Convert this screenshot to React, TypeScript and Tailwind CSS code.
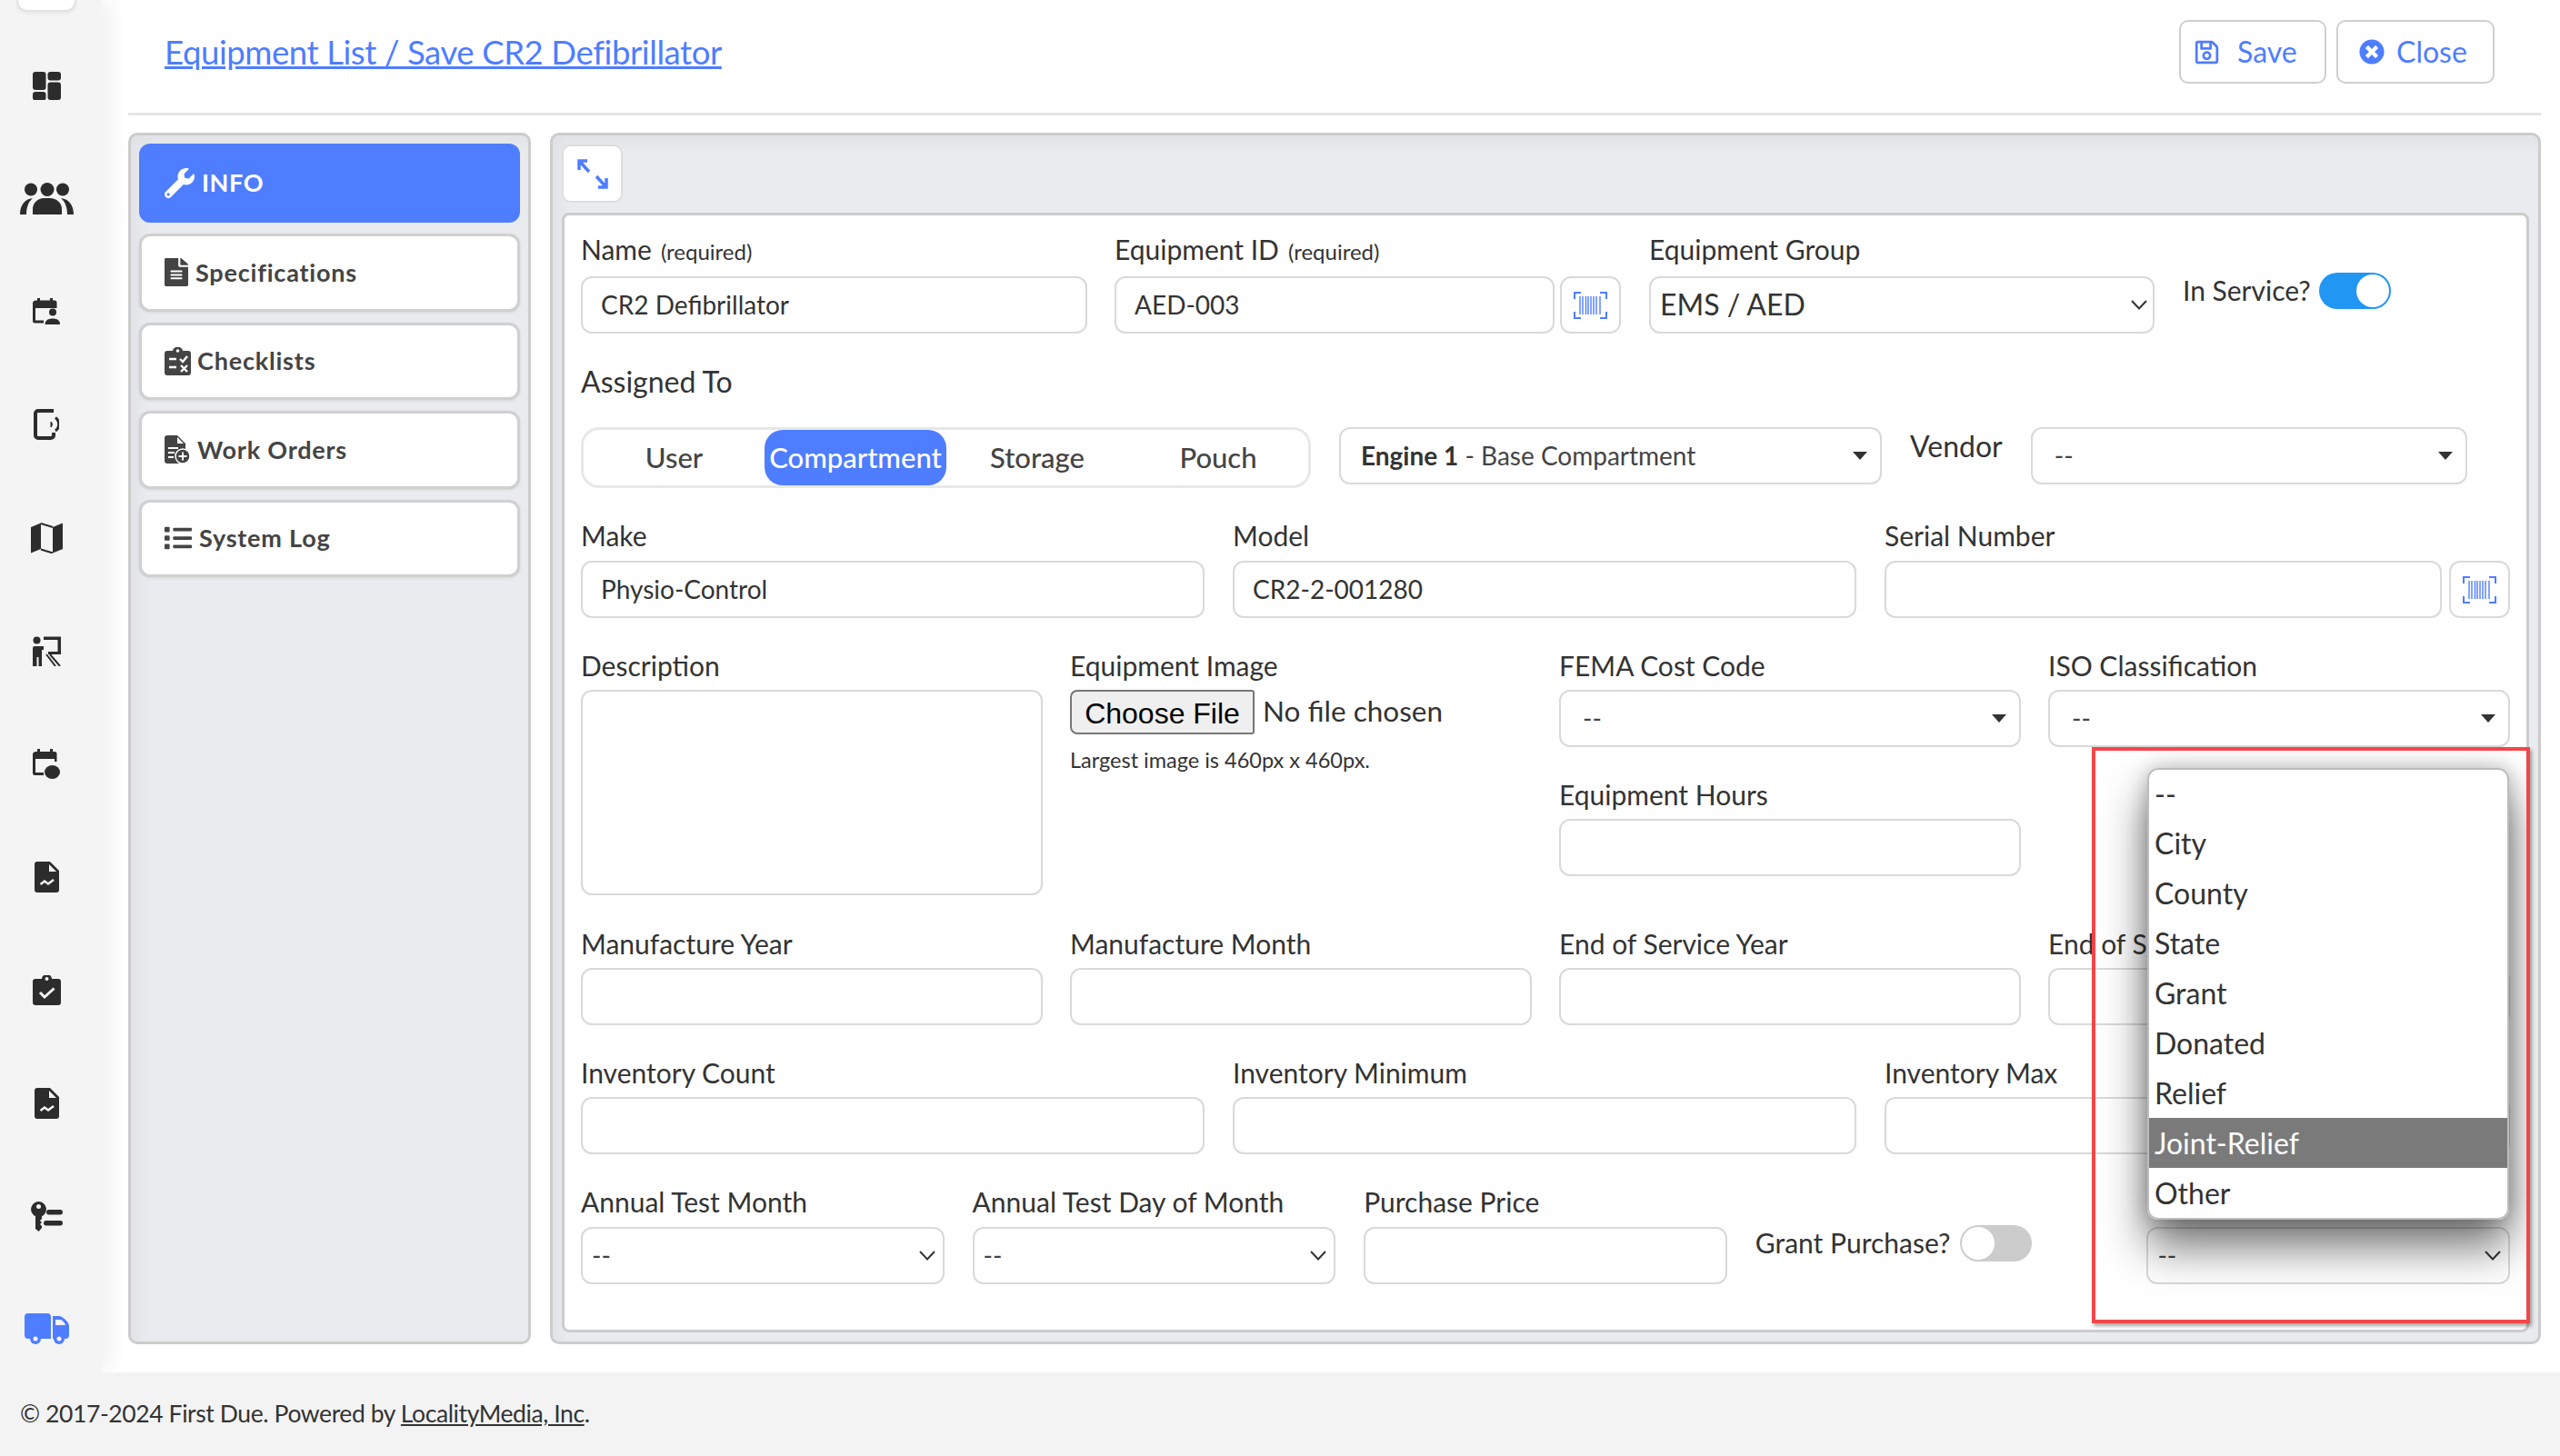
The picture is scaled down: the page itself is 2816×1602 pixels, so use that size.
import React from "react";
import { FaWrench, FaFileAlt, FaList, FaRegSave, FaTimesCircle } from "react-icons/fa";

const BLUE = "#4e7dff";

function DashIcon() {
  return (
    <svg width="31" height="31" viewBox="0 0 31 31" fill="#2c2c2c">
      <rect x="0" y="0" width="14.5" height="20" rx="3" />
      <rect x="0" y="22" width="14.5" height="9.5" rx="3" />
      <rect x="16.5" y="0" width="14.5" height="9.5" rx="3" />
      <rect x="16.5" y="11.5" width="14.5" height="19.5" rx="3" />
    </svg>
  );
}
function UsersIcon() {
  return (
    <svg width="59" height="35" viewBox="0 0 59 35" fill="#2c2c2c">
      <circle cx="12" cy="7.5" r="7" />
      <circle cx="30" cy="7.5" r="7.5" />
      <circle cx="47" cy="7.5" r="7" />
      <path d="M14 35 V29 C14 22 20 17 26 17 H33 C40 17 46 22 46 29 V35 Z" />
      <path d="M0 35 C0 25 5 18 14 17 C9 21 7 28 7 35 Z" />
      <path d="M59 35 C59 25 54 18 45 17 C50 21 52 28 52 35 Z" />
    </svg>
  );
}
function CalUserIcon() {
  return (
    <svg width="30" height="29" viewBox="0 0 30 29" fill="#2c2c2c">
      <rect x="5" y="0" width="3" height="4" />
      <rect x="19" y="0" width="3" height="4" />
      <path d="M3 2.5 H24 A2.5 2.5 0 0 1 26.5 5 V11 H0 V5 A3 3 0 0 1 3 2.5 Z" />
      <path d="M0 9 H3 V24.5 H12 V27.5 H2.5 A2.5 2.5 0 0 1 0 25 Z" />
      <circle cx="22" cy="15.5" r="4" />
      <path d="M13.5 29 C13.5 24.5 17 22.5 22 22.5 C27 22.5 30 24.5 30 29 Z" />
    </svg>
  );
}
function TabletIcon() {
  return (
    <svg width="28" height="34" viewBox="0 0 28 34" fill="none" stroke="#2c2c2c">
      <path d="M22 2 H5 A3 3 0 0 0 2 5 V29 A3 3 0 0 0 5 32 H19 A3 3 0 0 0 22 29 V26" strokeWidth="4" />
      <path d="M24 9.5 A9 9 0 0 1 24 24" strokeWidth="3" />
      <path d="M19 14 A4 4 0 0 1 19 20 Z" fill="#2c2c2c" strokeWidth="1" />
    </svg>
  );
}
function MapIcon() {
  return (
    <svg width="35" height="34" viewBox="0 0 35 34" fill="#2c2c2c">
      <path d="M0 5 L11 0.5 V29 L0 33.5 Z" />
      <path d="M24 5 L35 0.5 V29 L24 33.5 Z" />
      <path d="M11 1 L24 5 M11 29.5 L24 33.5" stroke="#2c2c2c" strokeWidth="2" />
    </svg>
  );
}
function TeacherIcon() {
  return (
    <svg width="31" height="33" viewBox="0 0 31 33" fill="#2c2c2c">
      <circle cx="4.5" cy="4.5" r="4" />
      <path d="M0 13 A2 2 0 0 1 2 11 H12 V15 H10 V33 H6.5 V23 H4.5 V33 H0 Z" />
      <path d="M12 0.5 H31 V20 H17 V17 H27.5 V4 H12 Z" />
      <path d="M15 20 L25 33 M19 20 L30 33" stroke="#2c2c2c" strokeWidth="2" />
    </svg>
  );
}
function CalBlobIcon() {
  return (
    <svg width="30" height="33" viewBox="0 0 30 33" fill="#2c2c2c">
      <rect x="5" y="0" width="3" height="4" />
      <rect x="19" y="0" width="3" height="4" />
      <path d="M3 3 H24 A2.5 2.5 0 0 1 26.5 5.5 V14 H24 V11 H0 V5.5 A3 3 0 0 1 3 3 Z" />
      <path d="M0 9 H3 V26 H12 V29 H2.5 A2.5 2.5 0 0 1 0 26.5 Z" />
      <ellipse cx="21.5" cy="25.5" rx="8.5" ry="7.5" />
    </svg>
  );
}
function FileChartIcon() {
  return (
    <svg width="27" height="34" viewBox="0 0 27 34">
      <path d="M3 0 H17 L27 10 V31 A3 3 0 0 1 24 34 H3 A3 3 0 0 1 0 31 V3 A3 3 0 0 1 3 0 Z" fill="#2c2c2c" />
      <path d="M16 3 V11 H24 Z" fill="#f4f4f4" />
      <path d="M6.5 25 L11 21.5 L15 24.5 L21 20" fill="none" stroke="#f4f4f4" strokeWidth="2.5" />
    </svg>
  );
}
function ClipCheckIcon() {
  return (
    <svg width="31" height="33" viewBox="0 0 31 33">
      <path d="M3 4 H10 A5.5 5 0 0 1 21 4 H28 A3 3 0 0 1 31 7 V30 A3 3 0 0 1 28 33 H3 A3 3 0 0 1 0 30 V7 A3 3 0 0 1 3 4 Z" fill="#2c2c2c" />
      <circle cx="15.5" cy="4" r="2" fill="#f4f4f4" />
      <path d="M8 19 L13 24 L23.5 14.5" fill="none" stroke="#f4f4f4" strokeWidth="3" />
    </svg>
  );
}
function KeyListIcon() {
  return (
    <svg width="35" height="33" viewBox="0 0 35 33" fill="#2c2c2c">
      <path d="M8.5 0 A8.5 8.5 0 0 1 12 16.2 V19 L10 21 L12 23 L10 25 L12 27 V29 L8.5 33 L5 30 V16.2 A8.5 8.5 0 0 1 8.5 0 Z" />
      <circle cx="8.5" cy="5.5" r="2.5" fill="#f4f4f4" />
      <rect x="17" y="9" width="18" height="5.5" rx="2.7" />
      <rect x="14" y="21" width="21" height="5.5" rx="2.7" />
    </svg>
  );
}
function TruckIcon() {
  return (
    <svg width="49" height="34" viewBox="0 0 49 34" fill={BLUE}>
      <path d="M4 0 H25 A4 4 0 0 1 29 4 V28 H4 A4 4 0 0 1 0 24 V4 A4 4 0 0 1 4 0 Z" />
      <path d="M31 3 H38 C42 3 49 10 49 14 V24 A4 4 0 0 1 45 28 H31 Z" />
      <circle cx="12" cy="28" r="6" />
      <circle cx="38" cy="28" r="6" />
      <circle cx="12" cy="28" r="2.5" fill="#f4f4f4" />
      <circle cx="38" cy="28" r="2.5" fill="#f4f4f4" />
      <path d="M34 7 H39 C41 7 44 10 45 13 H34 Z" fill="#f4f4f4" />
    </svg>
  );
}
function BarcodeIcon() {
  return (
    <svg width="37" height="30" viewBox="0 0 37 30" fill="none" stroke={BLUE}>
      <path d="M1 8 V1 H8 M29 1 H36 V8 M1 22 V29 H8 M29 29 H36 V22" strokeWidth="2" />
      <g strokeWidth="1.4">
        <path d="M7 5 V25 M10 5 V25 M13.5 5 V25 M16 5 V25 M19 5 V25 M22 5 V25 M25 5 V25 M29 5 V25" />
      </g>
    </svg>
  );
}
function ExpandIcon() {
  return (
    <svg width="34" height="33" viewBox="0 0 34 33" fill="none" stroke={BLUE} strokeWidth="3.5">
      <path d="M13 14 L3 3 M2 12 V2 H11" />
      <path d="M21 19 L31 30 M32 21 V31 H23" />
    </svg>
  );
}
function ChecklistsIcon() {
  return (
    <svg width="29" height="31" viewBox="0 0 29 31">
      <path d="M3 4 H9 A5 4 0 0 1 20 4 H26 A3 3 0 0 1 29 7 V28 A3 3 0 0 1 26 31 H3 A3 3 0 0 1 0 28 V7 A3 3 0 0 1 3 4 Z" fill="#444" />
      <circle cx="14.5" cy="4" r="1.8" fill="#fff" />
      <path d="M5 13 H13 M5 22 H13 M17 13 L20 16 L25 10 M18 20 L25 27 M25 20 L18 27" stroke="#fff" strokeWidth="2.4" fill="none" />
    </svg>
  );
}
function WorkOrderIcon() {
  return (
    <svg width="28" height="31" viewBox="0 0 28 31">
      <path d="M3 0 H14 L23 9 V28 A3 3 0 0 1 20 31 H3 A3 3 0 0 1 0 28 V3 A3 3 0 0 1 3 0 Z" fill="#444" />
      <path d="M14 2 V9 H21 Z" fill="#fff" />
      <path d="M4 14 H15 M4 19 H11 M4 24 H10" stroke="#fff" strokeWidth="2" />
      <circle cx="20" cy="23" r="8" fill="#444" stroke="#fff" strokeWidth="1.5" />
      <path d="M20 18.5 V27.5 M15.5 23 H24.5" stroke="#fff" strokeWidth="2" />
    </svg>
  );
}
function Triangle() {
  return (
    <svg width="16" height="9" viewBox="0 0 16 9" className="shrink-0">
      <path d="M0 0 H16 L8 9 Z" fill="#333" />
    </svg>
  );
}
function Chevron() {
  return (
    <svg width="18" height="11" viewBox="0 0 18 11" fill="none" stroke="#333" strokeWidth="2" className="shrink-0">
      <path d="M1 1 L9 9.5 L17 1" />
    </svg>
  );
}

const Label = ({ children, extra = "" }: { children: React.ReactNode; extra?: string }) => (
  <div className={`h-[36px] leading-[34px] text-[30px] text-[#333] whitespace-nowrap ${extra}`}>{children}</div>
);

const boxCls = "h-[63px] w-full rounded-[12px] border-2 border-[#d9d9d9] bg-white";

const TextBox = ({ value }: { value?: string }) =>
  value ? (
    <div className={`${boxCls} flex items-center px-[20px] pb-[2px] text-[28px] text-[#333]`}>{value}</div>
  ) : (
    <input className={`${boxCls} block`} />
  );

const SelectBox = ({ value = "--", caret = "tri", padCls = "px-[24px]" }: { value?: React.ReactNode; caret?: "tri" | "chev"; padCls?: string }) => (
  <div className={`${boxCls} flex items-center justify-between ${padCls} text-[28px] text-[#444]`}>
    <span className="whitespace-nowrap pb-[2px]">{value}</span>
    {caret === "tri" ? <Triangle /> : <Chevron />}
  </div>
);

const F = ({ label, children, mb = "mb-[8px]" }: { label: React.ReactNode; children: React.ReactNode; mb?: string }) => (
  <div className="min-w-0">
    <Label extra={mb}>{label}</Label>
    {children}
  </div>
);

const ScanButton = () => (
  <div className="flex h-[63px] w-[67px] shrink-0 items-center justify-center rounded-[12px] border-2 border-[#d9d9d9] bg-white">
    <BarcodeIcon />
  </div>
);

const Toggle = ({ on }: { on: boolean }) => (
  <div className={`flex h-[40px] w-[79px] shrink-0 items-center rounded-full p-[2px] ${on ? "justify-end bg-[#2196f3]" : "justify-start bg-[#cccccc]"}`}>
    <div className="h-[36px] w-[36px] rounded-full bg-white" />
  </div>
);

const Req = () => <span className="ml-[10px] text-[24px]">(required)</span>;

const sideIcons = [DashIcon, UsersIcon, CalUserIcon, TabletIcon, MapIcon, TeacherIcon, CalBlobIcon, FileChartIcon, ClipCheckIcon, FileChartIcon, KeyListIcon, TruckIcon];

const navItems = [
  { icon: <FaFileAlt preserveAspectRatio="none" color="#444" className="h-[31px] w-[26px]" />, label: "Specifications", gap: "gap-[8px]" },
  { icon: <ChecklistsIcon />, label: "Checklists", gap: "gap-[7px]" },
  { icon: <WorkOrderIcon />, label: "Work Orders", gap: "gap-[8px]" },
  { icon: <FaList size={30} color="#444" />, label: "System Log", gap: "gap-[8px]" },
];

const options = ["--", "City", "County", "State", "Grant", "Donated", "Relief", "Joint-Relief", "Other"];

export default function App() {
  return (
    <div className="relative flex h-[1602px] w-[2816px] flex-col overflow-hidden bg-white [font-family:Lato,sans-serif]">
      <div className="flex h-[1510px]">
        {/* icon rail */}
        <aside className="flex w-[111px] shrink-0 flex-col items-center overflow-visible bg-[#f4f4f4] pr-[9px] shadow-[10px_0_22px_rgba(0,0,0,0.06)]">
          <div className="h-[13px] w-[66px] shrink-0 rounded-b-[12px] border-x-2 border-b-2 border-[#e2e2e2] bg-white shadow-[0_2px_4px_rgba(0,0,0,0.06)]" />
          <div className="flex shrink-0 flex-col pt-[19px]">
            {sideIcons.map((Icon, i) => (
              <div key={i} className="flex h-[124.4px] items-center justify-center">
                <Icon />
              </div>
            ))}
          </div>
        </aside>

        <main className="flex min-w-0 flex-1 flex-col pl-[30px] pr-[21px]">
          <header className="flex h-[127px] shrink-0 items-center justify-between border-b-[3px] border-[#e5e5e5] pb-[10px] pl-[40px] pr-[51px]">
            <a className="text-[36.5px] tracking-[-0.4px] text-[#4e7dff] underline">Equipment List / Save CR2 Defibrillator</a>
            <div className="flex gap-[11px]">
              <div className="flex h-[70px] w-[162px] items-center gap-[19px] rounded-[10px] border-2 border-[#cfcfcf] pl-[14px] text-[32px] text-[#4e7dff]">
                <FaRegSave size={29} />
                <span>Save</span>
              </div>
              <div className="flex h-[70px] w-[174px] items-center gap-[13px] rounded-[10px] border-2 border-[#cfcfcf] pl-[23px] text-[32px] text-[#4e7dff]">
                <FaTimesCircle size={28} />
                <span>Close</span>
              </div>
            </div>
          </header>

          <div className="mt-[19px] flex h-[1333px] gap-[21px]">
            {/* left nav panel */}
            <section className="flex w-[443px] shrink-0 flex-col gap-[12px] rounded-[10px] border-[3px] border-[#cccccc] bg-[#e9ebee] p-[9px] shadow-[inset_8px_8px_16px_rgba(0,0,0,0.04)]">
              <div className="flex h-[87px] items-center gap-[8px] rounded-[12px] bg-[#4e7dff] pl-[28px] text-[27px] font-bold tracking-[0.6px] text-white">
                <FaWrench size={33} />
                <span>INFO</span>
              </div>
              {navItems.map((n) => (
                <div key={n.label} className={`flex h-[85.5px] items-center ${n.gap} rounded-[12px] border-[3px] border-[#d0d0d0] bg-white pl-[25px] text-[27px] font-bold tracking-[0.8px] text-[#444] shadow-[0_1px_3px_rgba(0,0,0,0.1)]`}>
                  {n.icon}
                  <span>{n.label}</span>
                </div>
              ))}
            </section>

            {/* right panel */}
            <section className="flex min-w-0 flex-1 flex-col gap-[11px] rounded-[10px] border-[3px] border-[#cccccc] bg-[#e9ebee] p-[10px] shadow-[inset_8px_8px_16px_rgba(0,0,0,0.04)]">
              <div className="flex h-[64px] w-[67px] shrink-0 items-center justify-center rounded-[10px] border-2 border-[#dedede] bg-white">
                <ExpandIcon />
              </div>
              <div className="flex-1 rounded-[8px] border-[3px] border-[#cccccc] bg-white pl-[18px] pr-[18px] pt-[20px]">
                {/* row 1 */}
                <div className="flex">
                  <div className="w-[557px]">
                    <F label={<>Name<Req /></>} mb="mb-[11px]">
                      <TextBox value="CR2 Defibrillator" />
                    </F>
                  </div>
                  <div className="ml-[30px] flex w-[557px] gap-[6px]">
                    <div className="w-[484px]">
                      <F label={<>Equipment ID<Req /></>} mb="mb-[11px]">
                        <TextBox value="AED-003" />
                      </F>
                    </div>
                    <div className="pt-[47px]">
                      <ScanButton />
                    </div>
                  </div>
                  <div className="ml-[31px] w-[556px]">
                    <F label="Equipment Group" mb="mb-[11px]">
                      <SelectBox value={<span className="text-[32px] text-[#333]">EMS / AED</span>} caret="chev" padCls="pl-[10px] pr-[6px]" />
                    </F>
                  </div>
                  <div className="ml-[31px] mt-[43px] flex h-[40px] items-center gap-[9px]">
                    <span className="pb-[2px] text-[30px] text-[#333]">In Service?</span>
                    <Toggle on />
                  </div>
                </div>

                {/* assigned */}
                <div className="mt-[36px] h-[36px] text-[32px] leading-[33px] text-[#333]">Assigned To</div>
                <div className="mt-[31px] flex items-start">
                  <div className="flex h-[67px] w-[803px] shrink-0 items-center rounded-[20px] border-[3px] border-[#e8e8e8] text-[31px] font-medium text-[#444]">
                    <div className="flex h-[61px] w-[199px] items-center justify-center">User</div>
                    <div className="flex h-[61px] w-[200px] items-center justify-center rounded-[20px] bg-[#4e7dff] text-white">Compartment</div>
                    <div className="flex h-[61px] w-[200px] items-center justify-center">Storage</div>
                    <div className="flex h-[61px] w-[198px] items-center justify-center">Pouch</div>
                  </div>
                  <div className="ml-[31px] w-[597px]">
                    <SelectBox
                      value={<><b className="font-bold text-[#333]">Engine 1</b> - Base Compartment</>}
                      padCls="pl-[22px] pr-[14px]"
                    />
                  </div>
                  <span className="ml-[31px] mt-[4px] h-[36px] text-[32px] leading-[33px] text-[#333]">Vendor</span>
                  <div className="ml-[31px] w-[480px]">
                    <SelectBox padCls="pl-[24px] pr-[14px]" />
                  </div>
                </div>

                {/* make */}
                <div className="mt-[35px] grid grid-cols-[686px_686px_minmax(0,1fr)] gap-x-[31px]">
                  <F label="Make" mb="mb-[9px]"><TextBox value="Physio-Control" /></F>
                  <F label="Model" mb="mb-[9px]"><TextBox value="CR2-2-001280" /></F>
                  <F label="Serial Number" mb="mb-[9px]">
                    <div className="flex gap-[8px]">
                      <TextBox />
                      <ScanButton />
                    </div>
                  </F>
                </div>

                {/* description */}
                <div className="mt-[35px] grid grid-cols-4 gap-x-[30px]">
                  <F label="Description">
                    <textarea className="block h-[226px] w-full resize-none rounded-[12px] border-2 border-[#d9d9d9]" />
                  </F>
                  <F label="Equipment Image">
                    <div className="flex items-center gap-[9px]">
                      <button className="h-[49px] w-[203px] rounded-l-[8px] rounded-r-[3px] border-2 border-[#767676] bg-[#efefef] pb-[4px] text-[32px] text-black [font-family:'Liberation_Sans',Arial,sans-serif]">Choose File</button>
                      <span className="pb-[2px] text-[31.5px] text-[#333]">No file chosen</span>
                    </div>
                    <p className="mt-[13px] text-[23.5px] leading-[30px] text-[#333]">Largest image is 460px x 460px.</p>
                  </F>
                  <div>
                    <F label="FEMA Cost Code"><SelectBox padCls="pl-[24px] pr-[14px]" /></F>
                    <div className="mt-[35px]">
                      <F label="Equipment Hours"><TextBox /></F>
                    </div>
                  </div>
                  <F label="ISO Classification"><SelectBox padCls="pl-[24px] pr-[14px]" /></F>
                </div>

                {/* manufacture */}
                <div className="mt-[36px] grid grid-cols-4 gap-x-[30px]">
                  <F label="Manufacture Year"><TextBox /></F>
                  <F label="Manufacture Month"><TextBox /></F>
                  <F label="End of Service Year"><TextBox /></F>
                  <F label="End of Service Month"><TextBox /></F>
                </div>

                {/* inventory */}
                <div className="mt-[35px] grid grid-cols-[686px_686px_minmax(0,1fr)] gap-x-[31px]">
                  <F label="Inventory Count"><TextBox /></F>
                  <F label="Inventory Minimum"><TextBox /></F>
                  <F label="Inventory Max"><TextBox /></F>
                </div>

                {/* annual */}
                <div className="mt-[35px] grid grid-cols-5 gap-x-[31px]">
                  <F label="Annual Test Month" mb="mb-[9px]"><SelectBox caret="chev" padCls="pl-[10px] pr-[8px]" /></F>
                  <F label="Annual Test Day of Month" mb="mb-[9px]"><SelectBox caret="chev" padCls="pl-[10px] pr-[8px]" /></F>
                  <F label="Purchase Price" mb="mb-[9px]"><TextBox /></F>
                  <div className="mt-[43px] flex h-[40px] items-center gap-[11px]">
                    <span className="whitespace-nowrap pb-[2px] text-[30px] text-[#333]">Grant Purchase?</span>
                    <Toggle on={false} />
                  </div>
                  <F label="Grant Type" mb="mb-[9px]"><SelectBox caret="chev" padCls="pl-[10px] pr-[8px]" /></F>
                </div>
              </div>
            </section>
          </div>
        </main>
      </div>

      <footer className="flex h-[92px] items-center bg-[#f3f3f3] pl-[22px] text-[26.5px] tracking-[-0.4px] text-[#333]">
        <span>
          © 2017-2024 First Due. Powered by <a className="underline">LocalityMedia, Inc</a>.
        </span>
      </footer>

      {/* annotation with open dropdown */}
      <div className="absolute left-[2301px] top-[822px] h-[634px] w-[482px] overflow-hidden border-4 border-[#f44649] shadow-[2px_3px_4px_rgba(0,0,0,0.35)]">
        <div className="absolute left-[57px] top-[19px] h-[497px] w-[398px] rounded-[12px] shadow-[0_30px_50px_rgba(0,0,0,0.55),0_0_22px_rgba(0,0,0,0.25)]" />
        <div className="absolute left-[57px] top-[19px] flex h-[497px] w-[398px] flex-col overflow-hidden rounded-[12px] border-2 border-[#bdbdbd] bg-white text-[32px] text-[#333]">
          {options.map((o, i) => (
            <div key={o} className={`flex shrink-0 items-center pl-[6px] ${i === 0 ? "h-[53px]" : "h-[55px]"} ${o === "Joint-Relief" ? "bg-[#7a7a7a] text-white" : ""}`}>{o}</div>
          ))}
        </div>
      </div>
    </div>
  );
}
